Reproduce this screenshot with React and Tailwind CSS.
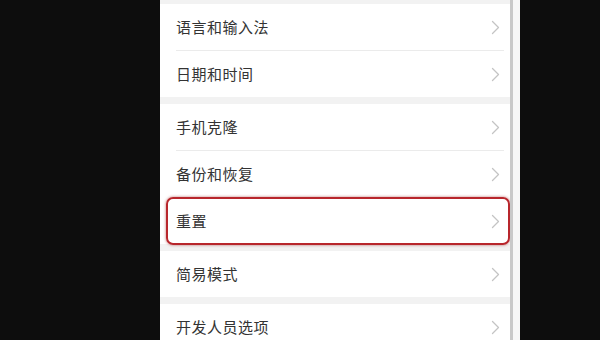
import React from "react";

const Chevron = () => (
  <svg width="9" height="15" viewBox="0 0 9 15" fill="none" className="shrink-0">
    <path d="M1.5 1.5 L7.5 7.5 L1.5 13.5" stroke="#c4c4c4" strokeWidth="1.3" strokeLinecap="round" strokeLinejoin="round" />
  </svg>
);

const Row = ({ label, divider, highlight }) => (
  <div className="relative">
    <div className="h-[46px] flex items-center justify-between pl-4 pr-[20px]">
      <span className="text-[15px] text-[#333] tracking-[0.5px]">{label}</span>
      <Chevron />
    </div>
    {divider && <div className="ml-4 mr-[16px] h-px bg-[#ebebeb]" />}
    {highlight && (
      <div className="absolute left-[6px] right-[10px] top-[-1px] bottom-[-1px] rounded-[7px] border-2 border-[#b8262c] shadow-[0_0_3px_rgba(150,20,20,0.6)]" />
    )}
  </div>
);

const Group = ({ items, highlightIndex }) => (
  <div className="bg-white">
    {items.map((label, i) => (
      <Row key={label} label={label} divider={i < items.length - 1 && highlightIndex !== i} highlight={highlightIndex === i} />
    ))}
  </div>
);

export default function App() {
  return (
    <div className="w-[600px] h-[340px] bg-[#0d0d0d] flex pl-[160px] overflow-hidden" style={{ fontFamily: '"Noto Sans CJK SC", "Noto Sans", sans-serif' }}>
      <div className="relative w-[360px] h-full bg-[#f2f2f2] flex flex-col gap-[7px] pt-[4px]">
        <Group items={["语言和输入法", "日期和时间"]} />
        <Group items={["手机克隆", "备份和恢复", "重置"]} highlightIndex={2} />
        <Group items={["简易模式"]} />
        <Group items={["开发人员选项"]} />
        <div className="absolute top-0 bottom-0 right-[7px] w-[3px] bg-[#c9c9c9]" />
        <div className="absolute top-0 bottom-0 right-0 w-[7px] bg-[#f7f7f7]" />
      </div>
    </div>
  );
}
